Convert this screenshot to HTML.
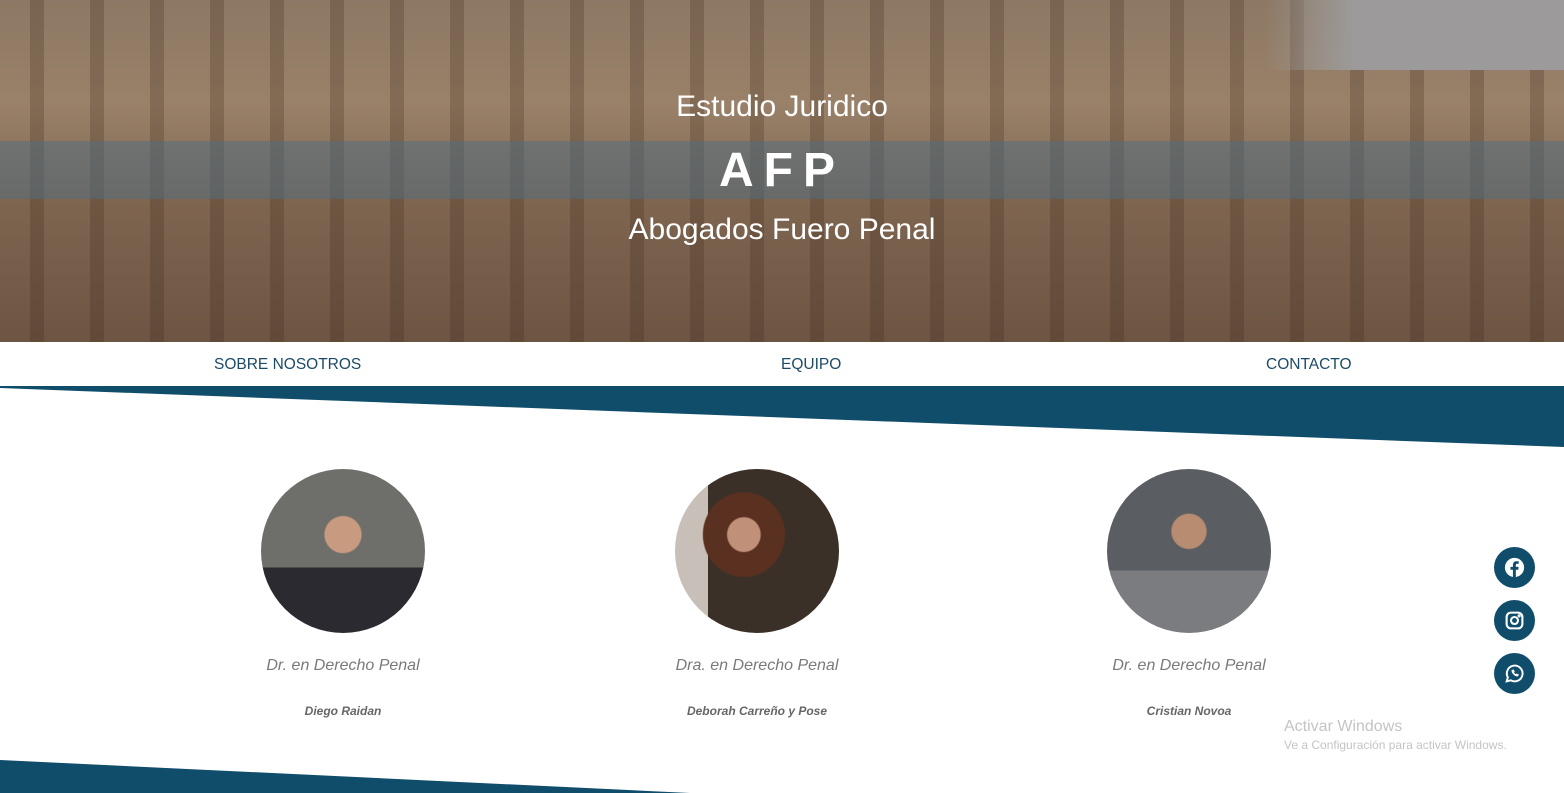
<!DOCTYPE html>
<html><head><meta charset="utf-8"><style>
body{margin:0;width:1564px;height:793px;overflow:hidden;background:#fff;font-family:"Liberation Sans",sans-serif;position:relative}
.hero{position:absolute;left:0;top:0;width:1564px;height:342px;overflow:hidden;
background:
repeating-linear-gradient(90deg,rgba(60,40,25,0) 0 30px,rgba(60,40,25,.25) 30px 44px,rgba(60,40,25,0) 44px 60px),
linear-gradient(180deg,#8c7864 0%,#9a8169 30%,#7e6550 60%,#6d5543 100%)}
.sky{position:absolute;right:0;top:0;width:300px;height:70px;background:linear-gradient(90deg,rgba(156,154,154,0),#9c9a9a 30%)}
.band{position:absolute;left:0;top:141px;width:1564px;height:58px;background:rgba(80,110,130,.5)}
.t{position:absolute;width:1564px;text-align:center;color:#fff;left:0}
.nav a{position:absolute;top:356px;color:#1c4a66;font-size:15.5px;text-decoration:none}
.p{position:absolute;top:469px;width:164px;height:164px;border-radius:50%;overflow:hidden}
.r{position:absolute;width:300px;text-align:center;color:#7a7a7a;font-style:italic}
.s{position:absolute;left:1494px;width:41px;height:41px;border-radius:50%;background:#104d6b}
.s svg{position:absolute;left:10px;top:10px}
</style></head><body>
<div class="hero"><div class="sky"></div><div class="band"></div>
<div class="t" style="top:90px;font-size:30px">Estudio Juridico</div>
<div class="t" style="top:143px;font-size:48px;font-weight:bold;letter-spacing:10px">AFP</div>
<div class="t" style="top:213px;font-size:30px">Abogados Fuero Penal</div>
</div>
<div class="nav"><a style="left:214px">SOBRE NOSOTROS</a><a style="left:781px">EQUIPO</a><a style="left:1266px">CONTACTO</a></div>
<svg style="position:absolute;left:0;top:386px" width="1564" height="407">
<polygon points="0,0 1564,0 1564,61 0,2" fill="#0f4d6a"/>
<polygon points="0,374 690,407 0,407" fill="#0f4d6a"/>
</svg>
<div class="p" style="left:261px;background:radial-gradient(circle at 50% 40%,#c89a80 0 14%,transparent 15%),linear-gradient(180deg,#6e6e6a 0 60%,#2a2a30 60%)"></div>
<div class="p" style="left:675px;background:radial-gradient(ellipse at 42% 40%,#c09078 0 12%,#5a3020 13% 30%,transparent 31%),linear-gradient(90deg,#c8c0b8 0 20%,#3a3028 20%)"></div>
<div class="p" style="left:1107px;background:radial-gradient(circle at 50% 38%,#b88c70 0 13%,transparent 14%),linear-gradient(180deg,#5a5e62 0 62%,#7a7c80 62%)"></div>
<div class="r" style="left:193px;top:657px;font-size:16px">Dr. en Derecho Penal</div>
<div class="r" style="left:607px;top:657px;font-size:16px">Dra. en Derecho Penal</div>
<div class="r" style="left:1039px;top:657px;font-size:16px">Dr. en Derecho Penal</div>
<div class="r" style="left:193px;top:704px;font-size:12px;font-weight:bold;color:#666">Diego Raidan</div>
<div class="r" style="left:607px;top:704px;font-size:12px;font-weight:bold;color:#666">Deborah Carreño y Pose</div>
<div class="r" style="left:1039px;top:704px;font-size:12px;font-weight:bold;color:#666">Cristian Novoa</div>
<div class="s" style="top:547px"><svg width="21" height="21" viewBox="0 0 24 24"><circle cx="12" cy="12" r="11" fill="#fff"/><path d="M13.5 23V14.5h2.8l.4-3.2h-3.2V9.3c0-.9.3-1.6 1.6-1.6h1.7V4.9c-.3 0-1.3-.1-2.5-.1-2.5 0-4.1 1.5-4.1 4.2v2.3H7.4v3.2h2.8V23z" fill="#104d6b"/></svg></div>
<div class="s" style="top:600px"><svg width="21" height="21" viewBox="0 0 24 24" fill="none" stroke="#fff" stroke-width="2.4"><rect x="3" y="3" width="18" height="18" rx="5"/><circle cx="12" cy="12" r="4"/><circle cx="17.3" cy="6.7" r=".6" fill="#fff"/></svg></div>
<div class="s" style="top:653px"><svg width="21" height="21" viewBox="0 0 24 24" fill="none" stroke="#fff" stroke-width="2.2"><path d="M3 21l1.4-4.6A9 9 0 1 1 7.8 19.8z"/><path d="M9 8.5c0 3 3 6.2 6.5 6.5l1-1.5-2-1-1 .8c-1-.5-2-1.5-2.5-2.5l.8-1-1-2z" fill="#fff" stroke-width="0.8"/></svg></div>
<div style="position:absolute;left:1284px;top:718px;color:#c4c4c4;font-size:16px">Activar Windows</div>
<div style="position:absolute;left:1284px;top:738px;color:#c4c4c4;font-size:12px">Ve a Configuración para activar Windows.</div>
</body></html>
